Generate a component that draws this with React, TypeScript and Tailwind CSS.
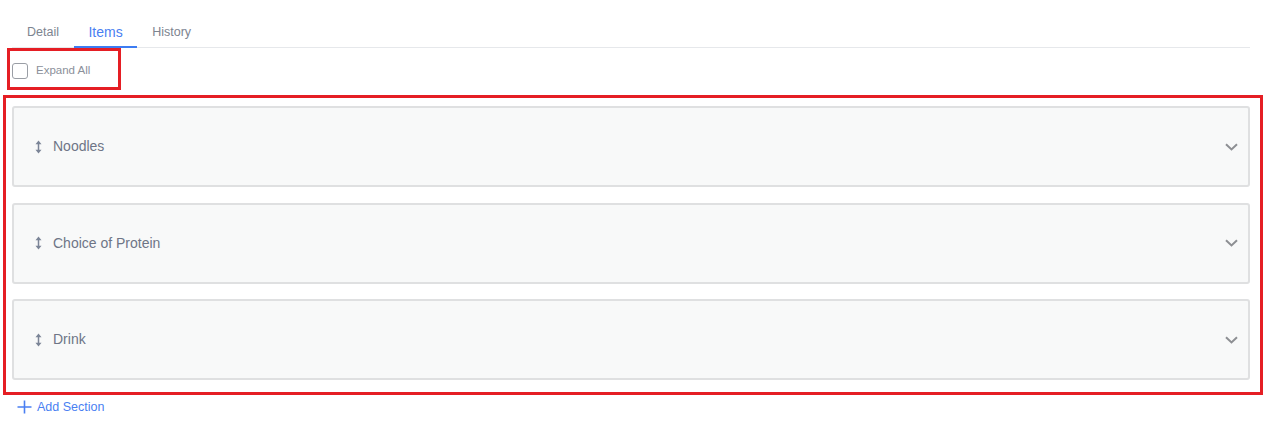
import React from "react";

const items = ["Noodles", "Choice of Protein", "Drink"];

function DragIcon() {
  return (
    <svg width="7" height="14" viewBox="0 0 7 14" className="shrink-0">
      <path d="M0.5 4.2 L3.5 0.5 L6.5 4.2 Z" fill="#7b8597" />
      <rect x="2.75" y="3.5" width="1.5" height="7" fill="#7b8597" />
      <path d="M0.5 9.8 L3.5 13.5 L6.5 9.8 Z" fill="#7b8597" />
    </svg>
  );
}

function Chevron() {
  return (
    <svg width="13" height="8" viewBox="0 0 13 8" className="shrink-0">
      <path d="M1 1.2 L6.5 6.4 L12 1.2" fill="none" stroke="#8d8f93" strokeWidth="2" />
    </svg>
  );
}

export default function App() {
  return (
    <div
      className="relative w-full h-[447px] bg-white overflow-hidden"
      style={{ fontFamily: '"Liberation Sans", Arial, sans-serif' }}
    >
      <div className="pl-[12px] pr-[15px]">
        <div className="flex h-[48px] border-b border-[#e6e8eb]">
          <div className="px-[15px] pt-[18px] flex items-center text-[12.5px] text-[#7d8490]">Detail</div>
          <div className="px-[14.5px] pt-[18px] flex items-center text-[14px] text-[#4a7ff2] border-b-2 border-[#3d7cf2] -mb-px">
            Items
          </div>
          <div className="px-[15px] pt-[18px] flex items-center text-[12.5px] text-[#7d8490]">History</div>
        </div>

        <div className="flex items-center gap-[8px] pt-[15px] h-[31px]">
          <div className="w-[16px] h-[16px] rounded-[3px] border border-[#9a9ea5] bg-white" />
          <span className="text-[11.5px] text-[#8b909a]">Expand All</span>
        </div>

        <div className="flex flex-col gap-[15.5px] mt-[27px]">
          {items.map((name) => (
            <div
              key={name}
              className="h-[81px] rounded-[3px] border-2 border-[#dfe0e1] bg-[#f8f9f9] flex items-center pl-[21px] pr-[10px]"
            >
              <DragIcon />
              <span className="ml-[11px] text-[14px] text-[#6e7586]">{name}</span>
              <div className="flex-1" />
              <Chevron />
            </div>
          ))}
        </div>

        <div className="flex items-center mt-[20px] pl-[5px] h-[14px] text-[12.5px] text-[#4a7ff2]">
          <svg width="15" height="14" viewBox="0 0 15 14" className="shrink-0">
            <path d="M7.5 0.5 V13.5 M0.5 7 H14.5" stroke="#4a7ff2" strokeWidth="1.6" fill="none" />
          </svg>
          <span className="ml-[5px]">Add Section</span>
        </div>
      </div>

      <div className="absolute left-[7px] top-[48px] w-[114px] h-[42px] border-[3px] border-[#e51e24] pointer-events-none" />
      <div className="absolute left-[3px] top-[95px] w-[1260px] h-[300px] border-[3px] border-[#e51e24] pointer-events-none" />
    </div>
  );
}
